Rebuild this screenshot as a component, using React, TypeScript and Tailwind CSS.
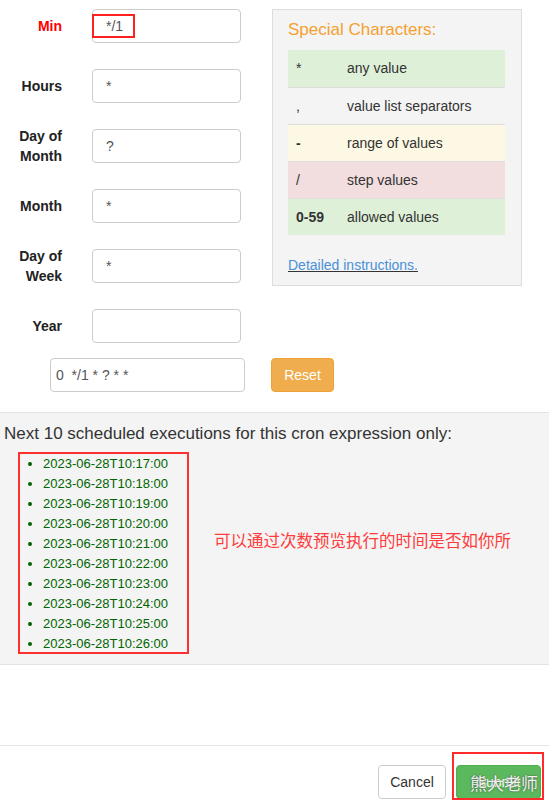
import React from "react";

const fields = [
  { label: ["Min"], value: "*/1", active: true },
  { label: ["Hours"], value: "*" },
  { label: ["Day of", "Month"], value: "?" },
  { label: ["Month"], value: "*" },
  { label: ["Day of", "Week"], value: "*" },
  { label: ["Year"], value: "" },
];

const specials = [
  { ch: "*", desc: "any value", bg: "bg-[#dff0d8]", bold: false },
  { ch: ",", desc: "value list separators", bg: "", bold: false },
  { ch: "-", desc: "range of values", bg: "bg-[#fcf8e3]", bold: true },
  { ch: "/", desc: "step values", bg: "bg-[#f2dede]", bold: false },
  { ch: "0-59", desc: "allowed values", bg: "bg-[#dff0d8]", bold: true },
];

const runs = [17, 18, 19, 20, 21, 22, 23, 24, 25, 26].map(
  (m) => `2023-06-28T10:${m}:00`
);

export default function App() {
  return (
    <div className="w-[549px] h-[802px] bg-white overflow-hidden text-[14px] text-[#333] font-['Liberation_Sans',Arial,sans-serif]">
      {/* top: fields + special characters */}
      <div className="flex pt-[9px]">
        <div className="w-[241px]">
          {fields.map((f, i) => (
            <div key={i} className="flex items-center h-[34px] mb-[26px]">
              <div
                className={`w-[62px] text-right font-bold leading-[20px] ${
                  f.active ? "text-[#ff0000]" : "text-[#222]"
                }`}
              >
                {f.label.map((l) => (
                  <div key={l}>{l}</div>
                ))}
              </div>
              <div className="relative ml-[30px] w-[149px] h-[34px] border border-[#ccc] rounded-[4px] flex items-center pl-[13px] text-[#555]">
                {f.value}
                {f.active && (
                  <div className="absolute left-[-1px] top-[4px] w-[43px] h-[24px] border-[2px] border-[#ff2020]" />
                )}
              </div>
            </div>
          ))}
        </div>

        <div className="ml-[31px] w-[250px] h-[277px] bg-[#f4f4f4] border border-[#ddd] px-[15px]">
          <div className="text-[#f5a030] text-[17px] leading-[20px] mt-[10px] mb-[10px]">
            Special Characters:
          </div>
          <div className="w-[217px]">
            {specials.map((s, i) => (
              <div
                key={i}
                className={`flex items-center h-[37px] ${
                  i > 0 ? "border-t border-[#ddd]" : ""
                } ${s.bg}`}
              >
                <div className={`w-[59px] pl-[8px] ${s.bold ? "font-bold" : ""}`}>
                  {s.ch}
                </div>
                <div>{s.desc}</div>
              </div>
            ))}
          </div>
          <div className="mt-[20px] text-[#4a90d9] underline decoration-[#333]">
            Detailed instructions.
          </div>
        </div>
      </div>

      {/* expression row */}
      <div className="flex items-center mt-[-11px] pl-[50px]">
        <div className="w-[195px] h-[34px] border border-[#ccc] rounded-[4px] flex items-center pl-[5px] text-[#555]">
          0&nbsp;&nbsp;*/1 * ? * *
        </div>
        <button className="ml-[26px] w-[63px] h-[34px] bg-[#f0ad4e] border border-[#eea236] rounded-[4px] text-white">
          Reset
        </button>
      </div>

      {/* next executions */}
      <div className="mt-[20px] h-[253px] bg-[#f4f4f4] border-t border-b border-[#e3e3e3] pl-[4px] pt-[10px]">
        <div className="text-[17px] leading-[22px] text-[#333]">
          Next 10 scheduled executions for this cron expression only:
        </div>
        <div className="flex items-start mt-[7px]">
          <div className="ml-[14px] w-[171px] h-[202px] border-[2px] border-[#ff3030]">
            <ul className="list-disc pl-[23px] marker:text-[#006400]">
              {runs.map((r) => (
                <li key={r} className="text-[13px] leading-[20px] text-[#006400]">
                  {r}
                </li>
              ))}
            </ul>
          </div>
          <div className="ml-[25px] mt-[77px] text-[16.5px] leading-[22px] text-[#ff3b3b] font-['Noto_Sans_CJK_SC',sans-serif]">
            可以通过次数预览执行的时间是否如你所
          </div>
        </div>
      </div>

      {/* footer */}
      <div className="mt-[80px] border-t border-[#e5e5e5] flex justify-end pt-[19px] pr-[8px]">
        <button className="w-[68px] h-[34px] border border-[#ccc] rounded-[4px] bg-white text-[#333]">
          Cancel
        </button>
        <div className="relative ml-[10px]">
          <button className="w-[85px] h-[34px] bg-[#5cb85c] border border-[#4cae4c] rounded-[4px] text-white">
            Submit
          </button>
          <div className="absolute left-[14px] top-[7px] text-[17px] leading-[22px] text-[#f0f0f0] [text-shadow:0_0_2px_#444] font-['Noto_Sans_CJK_SC',sans-serif] whitespace-nowrap">
            熊大老师
          </div>
          <div className="absolute left-[-4px] top-[-13px] w-[92px] h-[48px] border-[2px] border-[#ff2a2a]" />
        </div>
      </div>
    </div>
  );
}
